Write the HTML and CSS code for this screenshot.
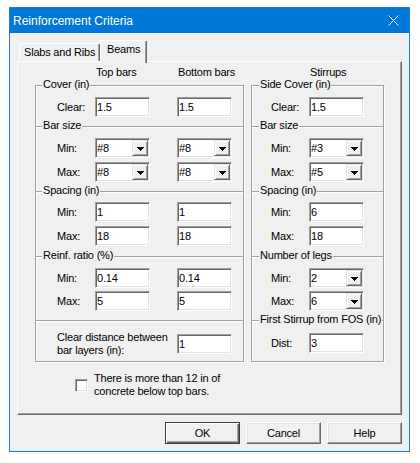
FILE: index.html
```html
<!DOCTYPE html>
<html>
<head>
<meta charset="utf-8">
<link rel="stylesheet" href="styles.css">
</head>
<body>
<div class="dialog">
  <div class="titlebar">
    <span class="title">Reinforcement Criteria</span>
    <svg class="close" width="11" height="11" viewBox="0 0 11 11"><path d="M0.5 0.5 L10.5 10.5 M10.5 0.5 L0.5 10.5" stroke="#fff" stroke-width="1" fill="none"/></svg>
  </div>
  <div class="body">
    <div class="tabs">
      <div class="tab">Slabs and Ribs</div>
      <div class="tab active">Beams</div>
    </div>
    <div class="panel">
      <div class="columns">
        <div class="colwrap left">
          <div class="heads"><span class="h1">Top bars</span><span>Bottom bars</span></div>
          <div class="col">
            <div class="sec sa">
              <span class="legend">Cover (in)</span>
              <div class="row"><span class="lbl">Clear:</span><div class="field">1.5</div><div class="field">1.5</div></div>
            </div>
            <div class="sec sb">
              <span class="legend">Bar size</span>
              <div class="row"><span class="lbl">Min:</span>
                <div class="field combo"><span class="val">#8</span><span class="drop"><svg width="7" height="4" viewBox="0 0 7 4" shape-rendering="crispEdges"><rect x="0" y="0" width="7" height="1"/><rect x="1" y="1" width="5" height="1"/><rect x="2" y="2" width="3" height="1"/><rect x="3" y="3" width="1" height="1"/></svg></span></div>
                <div class="field combo"><span class="val">#8</span><span class="drop"><svg width="7" height="4" viewBox="0 0 7 4" shape-rendering="crispEdges"><rect x="0" y="0" width="7" height="1"/><rect x="1" y="1" width="5" height="1"/><rect x="2" y="2" width="3" height="1"/><rect x="3" y="3" width="1" height="1"/></svg></span></div>
              </div>
              <div class="row"><span class="lbl">Max:</span>
                <div class="field combo"><span class="val">#8</span><span class="drop"><svg width="7" height="4" viewBox="0 0 7 4" shape-rendering="crispEdges"><rect x="0" y="0" width="7" height="1"/><rect x="1" y="1" width="5" height="1"/><rect x="2" y="2" width="3" height="1"/><rect x="3" y="3" width="1" height="1"/></svg></span></div>
                <div class="field combo"><span class="val">#8</span><span class="drop"><svg width="7" height="4" viewBox="0 0 7 4" shape-rendering="crispEdges"><rect x="0" y="0" width="7" height="1"/><rect x="1" y="1" width="5" height="1"/><rect x="2" y="2" width="3" height="1"/><rect x="3" y="3" width="1" height="1"/></svg></span></div>
              </div>
            </div>
            <div class="sec sc">
              <span class="legend">Spacing (in)</span>
              <div class="row"><span class="lbl">Min:</span><div class="field">1</div><div class="field">1</div></div>
              <div class="row"><span class="lbl">Max:</span><div class="field">18</div><div class="field">18</div></div>
            </div>
            <div class="sec sd">
              <span class="legend">Reinf. ratio (%)</span>
              <div class="row"><span class="lbl">Min:</span><div class="field">0.14</div><div class="field">0.14</div></div>
              <div class="row"><span class="lbl">Max:</span><div class="field">5</div><div class="field">5</div></div>
            </div>
            <div class="sec se-left">
              <div class="row tall"><span class="lbl wide">Clear distance between bar layers (in):</span><div class="field">1</div></div>
            </div>
          </div>
        </div>
        <div class="colwrap right">
          <div class="heads"><span>Stirrups</span></div>
          <div class="col">
            <div class="sec sa">
              <span class="legend">Side Cover (in)</span>
              <div class="row"><span class="lbl">Clear:</span><div class="field">1.5</div></div>
            </div>
            <div class="sec sb">
              <span class="legend">Bar size</span>
              <div class="row"><span class="lbl">Min:</span>
                <div class="field combo"><span class="val">#3</span><span class="drop"><svg width="7" height="4" viewBox="0 0 7 4" shape-rendering="crispEdges"><rect x="0" y="0" width="7" height="1"/><rect x="1" y="1" width="5" height="1"/><rect x="2" y="2" width="3" height="1"/><rect x="3" y="3" width="1" height="1"/></svg></span></div>
              </div>
              <div class="row"><span class="lbl">Max:</span>
                <div class="field combo"><span class="val">#5</span><span class="drop"><svg width="7" height="4" viewBox="0 0 7 4" shape-rendering="crispEdges"><rect x="0" y="0" width="7" height="1"/><rect x="1" y="1" width="5" height="1"/><rect x="2" y="2" width="3" height="1"/><rect x="3" y="3" width="1" height="1"/></svg></span></div>
              </div>
            </div>
            <div class="sec sc">
              <span class="legend">Spacing (in)</span>
              <div class="row"><span class="lbl">Min:</span><div class="field">6</div></div>
              <div class="row"><span class="lbl">Max:</span><div class="field">18</div></div>
            </div>
            <div class="sec sd">
              <span class="legend">Number of legs</span>
              <div class="row"><span class="lbl">Min:</span>
                <div class="field combo"><span class="val">2</span><span class="drop"><svg width="7" height="4" viewBox="0 0 7 4" shape-rendering="crispEdges"><rect x="0" y="0" width="7" height="1"/><rect x="1" y="1" width="5" height="1"/><rect x="2" y="2" width="3" height="1"/><rect x="3" y="3" width="1" height="1"/></svg></span></div>
              </div>
              <div class="row"><span class="lbl">Max:</span>
                <div class="field combo"><span class="val">6</span><span class="drop"><svg width="7" height="4" viewBox="0 0 7 4" shape-rendering="crispEdges"><rect x="0" y="0" width="7" height="1"/><rect x="1" y="1" width="5" height="1"/><rect x="2" y="2" width="3" height="1"/><rect x="3" y="3" width="1" height="1"/></svg></span></div>
              </div>
            </div>
            <div class="sec se-right">
              <span class="legend">First Stirrup from FOS (in)</span>
              <div class="row"><span class="lbl">Dist:</span><div class="field">3</div></div>
            </div>
          </div>
        </div>
      </div>
      <div class="checkrow">
        <span class="checkbox"></span>
        <span class="checktext">There is more than 12 in of concrete below top bars.</span>
      </div>
    </div>
    <div class="buttons">
      <div class="btn default">OK</div>
      <div class="btn">Cancel</div>
      <div class="btn">Help</div>
    </div>
  </div>
</div>
</body>
</html>
```
FILE: styles.css
```css
* { box-sizing: border-box; }
html, body { margin: 0; padding: 0; background: #fff; }
body {
  padding: 7px 0 0 9px;
  font-family: "Liberation Sans", Arial, sans-serif;
  font-size: 11px;
  letter-spacing: -0.2px;
  color: #000;
}
.dialog {
  width: 401px;
  height: 445px;
  border: 1px solid #1a7dd6;
  background: #f0f0f0;
  display: flex;
  flex-direction: column;
}
.titlebar {
  height: 25px;
  flex: none;
  background: #0078d7;
  color: #fff;
  display: flex;
  align-items: center;
  justify-content: space-between;
  padding: 0 10px 0 3px;
  font-size: 12px;
  letter-spacing: 0;
}
.close { display: block; }
.body {
  padding: 7px 7px 0 7px;
}
.tabs {
  height: 21px;
  display: flex;
  align-items: flex-end;
  padding-left: 2px;
}
.tab {
  height: 18px;
  width: 81px;
  padding-left: 4px;
  line-height: 17px;
  border-top: 1px solid #fff;
  border-left: 1px solid #fff;
  border-right: 1px solid #696969;
  box-shadow: inset -1px 0 0 #a0a0a0;
  border-radius: 2px 2px 0 0;
  background: #f0f0f0;
}
.tab.active {
  position: relative;
  z-index: 1;
  width: 47px;
  height: 23px;
  margin-bottom: -2px;
  padding-left: 6px;
  padding-top: 2px;
  line-height: 13px;
}
.panel {
  height: 354px;
  border-top: 1px solid #fff;
  border-left: 1px solid #fff;
  border-right: 1px solid #696969;
  border-bottom: 1px solid #696969;
  box-shadow: inset -1px -1px 0 #a0a0a0;
  padding: 4px 17px 0 17px;
}
.columns {
  display: flex;
  gap: 7px;
}
.colwrap.left { width: 209px; }
.colwrap.right { width: 133px; }
.heads {
  height: 13px;
  line-height: 13px;
  margin-bottom: 6px;
  display: flex;
  white-space: nowrap;
}
.left .heads { padding-left: 61px; }
.left .heads .h1 { width: 82px; }
.right .heads { padding-left: 59px; }
.col {
  border-left: 1px solid #a0a0a0;
  border-right: 1px solid #a0a0a0;
  border-bottom: 1px solid #a0a0a0;
  box-shadow: inset 1px 0 0 #fff, 1px 1px 0 #fff;
}
.sec {
  position: relative;
  border-top: 1px solid #a0a0a0;
  box-shadow: inset 0 1px 0 #fff;
}
.left .sec { padding-left: 21px; }
.right .sec { padding-left: 19px; }
.legend {
  position: absolute;
  top: -8px;
  left: 6px;
  padding: 0 1px;
  line-height: 13px;
  background: #f0f0f0;
  white-space: nowrap;
}
.right .legend { left: 7px; }
.row {
  display: flex;
  align-items: center;
  height: 20px;
  gap: 27px;
}
.right .row { gap: 0; }
.lbl {
  width: 38px;
  margin-right: -27px;
  white-space: nowrap;
}
.right .lbl { margin-right: 0; }
.sa { padding-top: 11px; padding-bottom: 9px; }
.sb { padding-top: 11px; padding-bottom: 9px; }
.sb .row + .row { margin-top: 4px; }
.sc { padding-top: 10px; padding-bottom: 10px; }
.sc .row + .row { margin-top: 4px; }
.sd { padding-top: 11px; padding-bottom: 9px; }
.sd .row + .row { margin-top: 3px; }
.se-left { padding-top: 10px; padding-bottom: 4px; }
.se-right { padding-top: 12px; padding-bottom: 8px; }
.row.tall { height: 26px; }
.lbl.wide {
  width: 120px;
  flex: none;
  white-space: normal;
  line-height: 13px;
}
.field {
  width: 55px;
  height: 20px;
  flex: none;
  background: #fff;
  border: 1px solid;
  border-color: #a0a0a0 #fff #fff #a0a0a0;
  box-shadow: inset 1px 1px 0 #696969, inset -1px -1px 0 #e3e3e3;
  padding-left: 1px;
  line-height: 18px;
  white-space: nowrap;
}
.field.combo {
  display: flex;
  padding: 1px;
  line-height: 16px;
}
.combo .val { flex: 1; }
.drop {
  width: 16px;
  height: 16px;
  background: #f0f0f0;
  border: 1px solid;
  border-color: #e3e3e3 #696969 #696969 #e3e3e3;
  box-shadow: inset 1px 1px 0 #fff, inset -1px -1px 0 #a0a0a0;
  display: flex;
  align-items: center;
  justify-content: center;
}
.drop svg { display: block; fill: #000; margin-top: 1px; }
.checkrow {
  display: flex;
  align-items: center;
  margin-top: 10px;
  padding-left: 40px;
  gap: 6px;
}
.checkbox {
  width: 13px;
  height: 13px;
  flex: none;
  background: #fff;
  border: 1px solid;
  border-color: #a0a0a0 #fff #fff #a0a0a0;
  box-shadow: inset 1px 1px 0 #696969, inset -1px -1px 0 #e3e3e3;
}
.checktext {
  width: 135px;
  line-height: 13px;
}
.buttons {
  display: flex;
  justify-content: flex-end;
  gap: 6px;
  margin-top: 7px;
}
.btn {
  width: 75px;
  height: 22px;
  display: flex;
  align-items: center;
  justify-content: center;
  border: 1px solid;
  border-color: #fff #696969 #696969 #fff;
  box-shadow: inset -1px -1px 0 #a0a0a0, inset 1px 1px 0 #e3e3e3;
  background: #f0f0f0;
}
.btn.default {
  border-color: #3c3c3c;
  box-shadow: inset 1px 1px 0 #fff, inset -1px -1px 0 #696969, inset -2px -2px 0 #a0a0a0;
}
```
